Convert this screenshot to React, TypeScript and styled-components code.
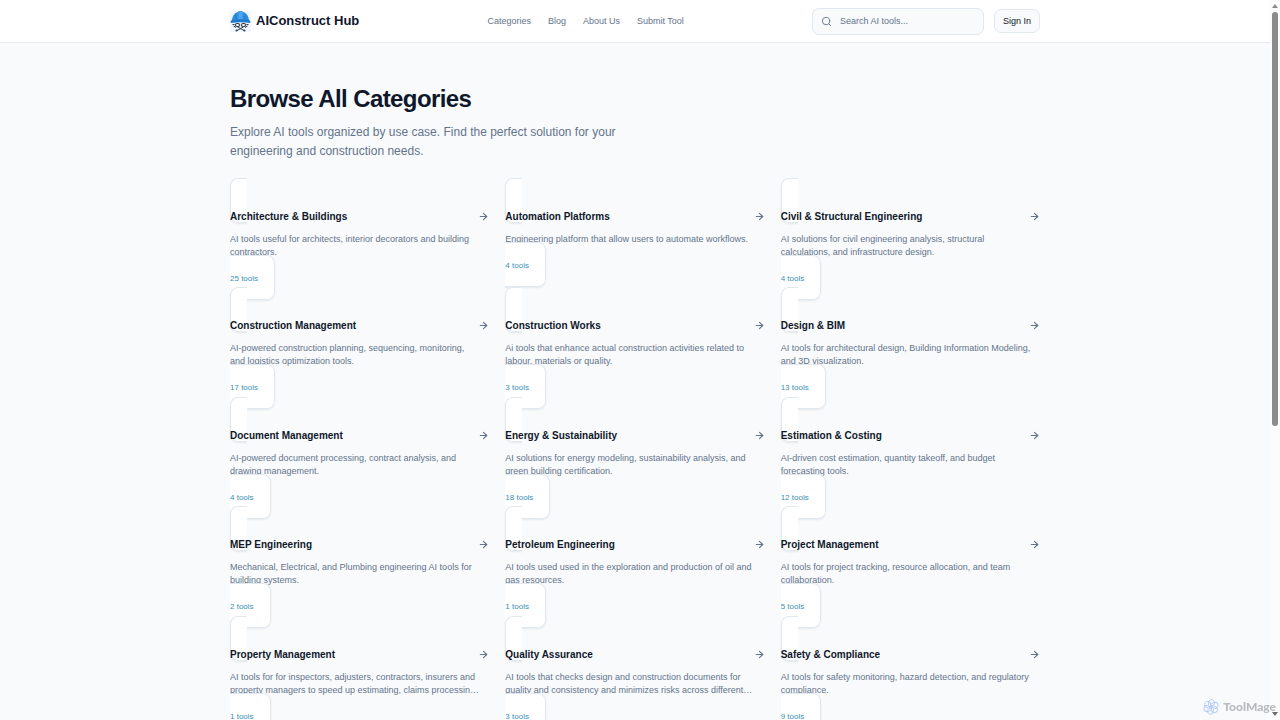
import React from "react";
import styled, { createGlobalStyle } from "styled-components";
import { ArrowRight, Search } from "lucide-react";

const GlobalStyle = createGlobalStyle`
  *, *::before, *::after { box-sizing: border-box; }
  html { scrollbar-width: none; }
  body {
    margin: 0;
    background: #f8fafc;
    color: #0f172a;
    font-family: "Liberation Sans", Arial, sans-serif;
    font-size: 10px;
    line-height: 16px;
  }
  h1, h2, p { margin: 0; }
`;

const Page = styled.div`
  padding-right: 10px;
`;

const Header = styled.header`
  background: #ffffff;
  border-bottom: 1px solid #e9edf2;
`;

const Container = styled.div`
  width: 100%;
  max-width: 842px;
  margin: 0 auto;
  padding: 0 16px;
`;

const HeaderRow = styled(Container)`
  display: flex;
  align-items: center;
  justify-content: space-between;
  height: 42px;
`;

const Brand = styled.a`
  display: flex;
  align-items: center;
  gap: 5px;
  color: #0f172a;
  font-size: 13px;
  font-weight: 700;
  text-decoration: none;
`;

const Nav = styled.nav`
  display: flex;
  gap: 17px;
`;

const NavLink = styled.a`
  color: #64748b;
  font-size: 9px;
  text-decoration: none;
`;

const Actions = styled.div`
  display: flex;
  align-items: center;
  gap: 10px;
`;

const SearchBox = styled.label`
  display: flex;
  align-items: center;
  gap: 8px;
  width: 172px;
  height: 27px;
  padding: 0 8px;
  border: 1px solid #e2e8f0;
  border-radius: 7px;
  background: #f8fafc;
  color: #64748b;
`;

const SearchInput = styled.input`
  flex: 1;
  min-width: 0;
  padding: 0;
  border: 0;
  outline: 0;
  background: transparent;
  color: #0f172a;
  font-family: inherit;
  font-size: 9px;
  &::placeholder { color: #64748b; opacity: 1; }
`;

const SignIn = styled.button`
  height: 24px;
  padding: 0 8px;
  border: 1px solid #e2e8f0;
  border-radius: 7px;
  background: #f8fafc;
  color: #0f172a;
  font-family: inherit;
  font-size: 9px;
`;

const Main = styled.main`
  padding: 42px 0;
`;

const Title = styled.h1`
  margin-bottom: 11px;
  font-size: 24px;
  font-weight: 700;
  line-height: 27px;
  letter-spacing: -0.025em;
`;

const Lead = styled.p`
  max-width: 428px;
  margin-bottom: 32px;
  color: #64748b;
  font-size: 12px;
  line-height: 19px;
`;

const Grid = styled.div`
  display: grid;
  grid-template-columns: repeat(3, minmax(0, 1fr));
  gap: 16px;
  min-height: 531px;
`;

const Card = styled.a`
  padding: 16px;
  border: 1px solid #e2e8f0;
  border-radius: 8px;
  background: #ffffff;
  box-shadow: 0 1px 2px rgba(15, 23, 42, 0.08);
  color: inherit;
  text-decoration: none;
`;

const CardHead = styled.div`
  display: flex;
  align-items: center;
  justify-content: space-between;
  margin-bottom: 9px;
  color: #64748b;
`;

const CardTitle = styled.h2`
  color: #0f172a;
  font-size: 10px;
  font-weight: 700;
  line-height: 15px;
`;

const CardText = styled.p`
  margin-bottom: 11px;
  padding-right: 8px;
  color: #64748b;
  font-size: 9px;
  line-height: 13px;
`;

const Count = styled.span`
  color: #3b8fb5;
  font-size: 8px;
  line-height: 8px;
`;

const ScrollTrack = styled.div`
  position: fixed;
  top: 0;
  right: 0;
  bottom: 0;
  display: flex;
  flex-direction: column;
  align-items: center;
  width: 10px;
  padding: 12px 0;
  background: #fcfcfc;
`;

const ScrollThumb = styled.div`
  width: 6px;
  height: 59.5%;
  border-radius: 3px;
  background: #8b8b8b;
`;

const ScrollArrow = styled.svg<{ $end?: boolean }>`
  position: absolute;
  left: 2px;
  ${(p) => (p.$end ? "bottom: 4px; transform: rotate(180deg);" : "top: 4px;")}
`;

const Watermark = styled.div`
  position: fixed;
  right: 4px;
  bottom: 4px;
  display: flex;
  align-items: center;
  gap: 4px;
  color: #b8bbbf;
  font-family: Lato, "Open Sans", sans-serif;
  font-size: 12px;
  font-weight: 900;
  line-height: 18px;
`;

const categories: [string, string, number][] = [
  ["Architecture & Buildings", "AI tools useful for architects, interior decorators and building contractors.", 25],
  ["Automation Platforms", "Engineering platform that allow users to automate workflows.", 4],
  ["Civil & Structural Engineering", "AI solutions for civil engineering analysis, structural calculations, and infrastructure design.", 4],
  ["Construction Management", "AI-powered construction planning, sequencing, monitoring, and logistics optimization tools.", 17],
  ["Construction Works", "Ai tools that enhance actual construction activities related to labour, materials or quality.", 3],
  ["Design & BIM", "AI tools for architectural design, Building Information Modeling, and 3D visualization.", 13],
  ["Document Management", "AI-powered document processing, contract analysis, and drawing management.", 4],
  ["Energy & Sustainability", "AI solutions for energy modeling, sustainability analysis, and green building certification.", 18],
  ["Estimation & Costing", "AI-driven cost estimation, quantity takeoff, and budget forecasting tools.", 12],
  ["MEP Engineering", "Mechanical, Electrical, and Plumbing engineering AI tools for building systems.", 2],
  ["Petroleum Engineering", "AI tools used used in the exploration and production of oil and gas resources.", 1],
  ["Project Management", "AI tools for project tracking, resource allocation, and team collaboration.", 5],
  ["Property Management", "AI tools for for inspectors, adjusters, contractors, insurers and property managers to speed up estimating, claims processin…", 1],
  ["Quality Assurance", "AI tools that checks design and construction documents for quality and consistency and minimizes risks across different…", 3],
  ["Safety & Compliance", "AI tools for safety monitoring, hazard detection, and regulatory compliance.", 9],
];

function HelmetLogo() {
  return (
    <svg width="21" height="21" viewBox="0 0 42 42" aria-hidden="true">
      <rect width="42" height="42" fill="#f1f7fc" />
      <path d="M4 20C4 9 11 3 16 2l2-2h6l2 2c5 1 12 7 12 18z" fill="#2f8fe0" />
      <path d="M17 1l1-1h6l1 1v15h-8z" fill="#4ba5ef" />
      <path d="M11 7l2 9M31 7l-2 9" stroke="#1b6fbd" strokeWidth="1.5" />
      <path d="M1 21q2-4 6-4h28q4 0 6 4l-1 3q-19-3-38 0z" fill="#1f7bcd" />
      <path d="M8 25h26v5q-13 6-26 0z" fill="#dbe3ea" />
      <rect x="11" y="25" width="8" height="6" rx="3" fill="#f8fafc" stroke="#2d3c4e" strokeWidth="2.2" />
      <rect x="23" y="25" width="8" height="6" rx="3" fill="#f8fafc" stroke="#2d3c4e" strokeWidth="2.2" />
      <path d="M5 27h4M33 27h4M7 30l5 3M35 30l-5 3M14 39l13-7M28 39l-13-7" stroke="#2d3c4e" strokeWidth="2" />
      <circle cx="13" cy="39" r="2" fill="#2d3c4e" />
      <circle cx="29" cy="39" r="2" fill="#2d3c4e" />
    </svg>
  );
}

function SwirlLogo() {
  return (
    <svg width="16" height="16" viewBox="0 0 32 32" fill="none" stroke="#afc8f7" strokeWidth="1.8" aria-hidden="true">
      {[0, 60, 120, 180, 240, 300].map((a) => (
        <path key={a} d="M11 13V7a6 6 0 0 1 11-3q3 5-1 8l-5 3" transform={`rotate(${a} 16 16)`} />
      ))}
      <circle cx="16" cy="16" r="3" />
    </svg>
  );
}

export default function App() {
  return (
    <>
      <GlobalStyle />
      <Page>
        <Header>
          <HeaderRow>
            <Brand href="#">
              <HelmetLogo />
              AIConstruct Hub
            </Brand>
            <Nav>
              {["Categories", "Blog", "About Us", "Submit Tool"].map((label) => (
                <NavLink key={label} href="#">{label}</NavLink>
              ))}
            </Nav>
            <Actions>
              <SearchBox>
                <Search size={11} aria-hidden="true" />
                <SearchInput type="search" placeholder="Search AI tools..." aria-label="Search AI tools" />
              </SearchBox>
              <SignIn type="button">Sign In</SignIn>
            </Actions>
          </HeaderRow>
        </Header>
        <Main>
          <Container>
            <Title>Browse All Categories</Title>
            <Lead>
              Explore AI tools organized by use case. Find the perfect solution for your engineering and construction needs.
            </Lead>
            <Grid>
              {categories.map(([name, text, count]) => (
                <div key={name}>
                  <Card href="#">
                    <CardHead>
                      <CardTitle>{name}</CardTitle>
                      <ArrowRight size={11} strokeWidth={2.5} aria-hidden="true" />
                    </CardHead>
                    <CardText>{text}</CardText>
                    <Count>{count} tools</Count>
                  </Card>
                </div>
              ))}
            </Grid>
          </Container>
        </Main>
      </Page>
      <ScrollTrack aria-hidden="true">
        <ScrollArrow width="6" height="4" viewBox="0 0 6 4"><path d="M3 0l3 4H0z" fill="#8b8b8b" /></ScrollArrow>
        <ScrollThumb />
        <ScrollArrow $end width="6" height="4" viewBox="0 0 6 4"><path d="M3 0l3 4H0z" fill="#6b6b6b" /></ScrollArrow>
      </ScrollTrack>
      <Watermark>
        <SwirlLogo />
        ToolMage
      </Watermark>
    </>
  );
}
